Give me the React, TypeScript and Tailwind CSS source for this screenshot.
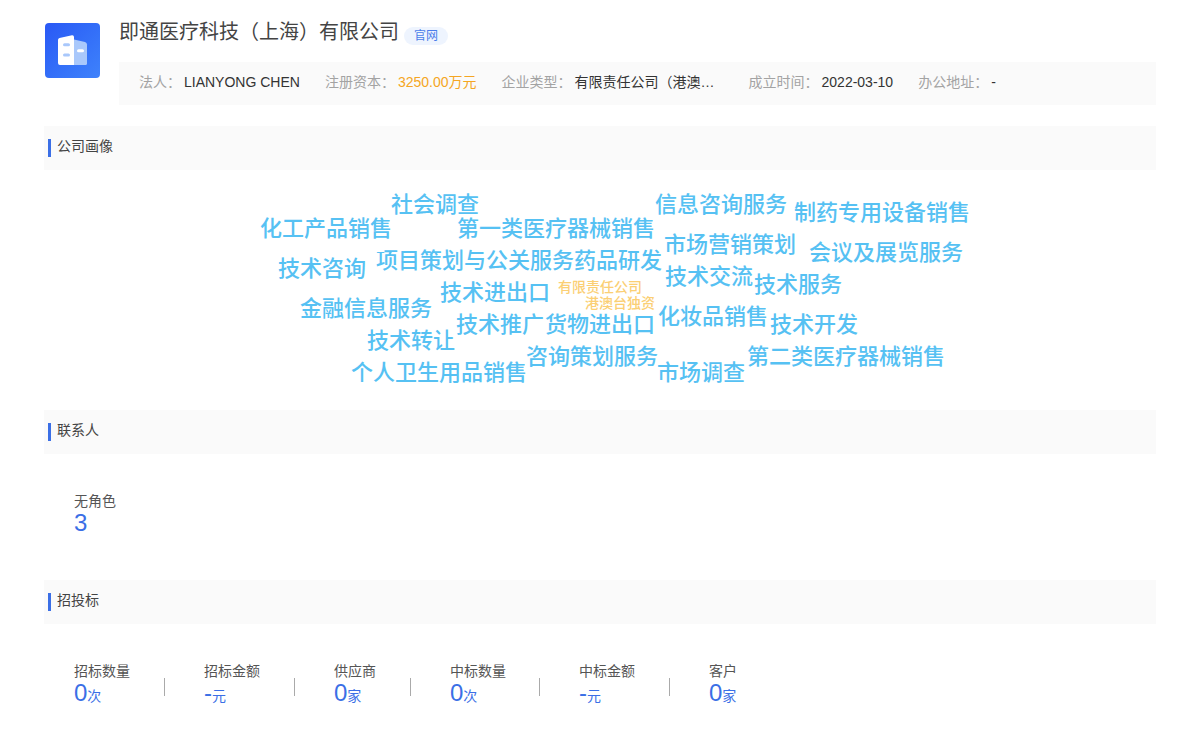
import React from "react";

const cloud: [string, number, number][] = [
  ["社会调查", 391, 204],
  ["化工产品销售", 260, 228],
  ["第一类医疗器械销售", 457, 228],
  ["信息咨询服务", 655, 204],
  ["制药专用设备销售", 794, 212],
  ["市场营销策划", 664, 244],
  ["会议及展览服务", 809, 252],
  ["技术咨询", 278, 268],
  ["项目策划与公关服务", 376, 260],
  ["药品研发", 574, 260],
  ["技术交流", 665, 276],
  ["技术服务", 754, 284],
  ["技术进出口", 440, 292],
  ["金融信息服务", 300, 308],
  ["化妆品销售", 658, 316],
  ["技术推广", 456, 324],
  ["货物进出口", 545, 324],
  ["技术开发", 770, 324],
  ["技术转让", 367, 340],
  ["咨询策划服务", 526, 356],
  ["第二类医疗器械销售", 747, 356],
  ["个人卫生用品销售", 351, 372],
  ["市场调查", 657, 372],
];

const SectionHeader = ({ title }: { title: string }) => (
  <div className="flex h-[44px] items-center bg-[#fafafa] pl-[4px]">
    <div className="h-[18px] w-[3px] bg-[#3b6fe6]" />
    <span className="ml-[6px] -translate-y-[2px] text-[14px] leading-[20px] text-[#444]">{title}</span>
  </div>
);

const Info = ({ label, value, valueClass = "text-[#333]", wide }: { label: string; value: string; valueClass?: string; wide?: boolean }) => (
  <div className="mr-[25px] flex shrink-0 items-center whitespace-nowrap">
    <span className="mr-[3px] text-[#a3a3a3]">{label}</span>
    <span className={`${valueClass} ${wide ? "w-[149px]" : ""}`}>{value}</span>
  </div>
);

const Stat = ({ label, num, unit }: { label: string; num: string; unit: string }) => (
  <div className="flex flex-col">
    <span className="h-[20px] text-[14px] leading-[20px] text-[#555]">{label}</span>
    <span className="h-[24px] leading-[24px] text-[#3b6fe6]">
      <span className="text-[24px]">{num}</span>
      <span className="text-[14px]">{unit}</span>
    </span>
  </div>
);

const stats = [
  ["招标数量", "0", "次"],
  ["招标金额", "-", "元"],
  ["供应商", "0", "家"],
  ["中标数量", "0", "次"],
  ["中标金额", "-", "元"],
  ["客户", "0", "家"],
];

export default function App() {
  return (
    <div className="h-[752px] w-[1200px] overflow-hidden bg-white pl-[44px] pr-[44px] pt-[20px] font-['Liberation_Sans','Noto_Sans_CJK_SC',sans-serif]">
      <div className="flex h-[86px]">
        <div className="ml-[1px] mt-[3px] h-[55px] w-[55px] shrink-0 overflow-hidden rounded-[4px] bg-gradient-to-br from-[#2a58f5] to-[#3f82fb]">
          <svg width="55" height="55" viewBox="0 0 55 55">
            <path d="M29 16.5 L40 19 Q42 19.5 42 21.5 V40.5 Q42 42 40.5 42 H29 Z" fill="#a9c8fb" />
            <path d="M13 17 Q13 15.3 14.5 15 L27 12.2 Q29 12 29 14 V42 H15 Q13 42 13 40 Z" fill="#ffffff" />
            <rect x="18" y="20.2" width="7" height="3" rx="1.5" fill="#a9c8fb" />
            <rect x="18" y="30.5" width="7" height="3" rx="1.5" fill="#a9c8fb" />
            <rect x="32" y="26.2" width="7" height="3" rx="1.5" fill="#ffffff" />
          </svg>
        </div>
        <div className="ml-[19px] flex min-w-0 flex-1 flex-col">
          <div className="flex h-[22px] items-center">
            <span className="translate-y-[1px] text-[20px] leading-[22px] text-[#444]">即通医疗科技（上海）有限公司</span>
            <span className="ml-[5px] mt-[9px] flex h-[18px] w-[44px] items-center justify-center rounded-full bg-[#eef4fe] text-[12px] text-[#4a7dea]">官网</span>
          </div>
          <div className="mt-[20px] flex h-[43px] items-center bg-[#fafafa] pb-[2px] pl-[20px] text-[14px]">
            <Info label="法人：" value="LIANYONG CHEN" />
            <Info label="注册资本：" value="3250.00万元" valueClass="text-[#f5a623]" />
            <Info label="企业类型：" value="有限责任公司（港澳…" wide />
            <Info label="成立时间：" value="2022-03-10" />
            <Info label="办公地址：" value="-" />
          </div>
        </div>
      </div>

      <div className="mt-[20px]">
        <SectionHeader title="公司画像" />
      </div>
      <div className="relative h-[240px]">
        {cloud.map(([text, x, y]) => (
          <span
            key={text}
            className="absolute whitespace-nowrap text-[22px] font-medium leading-[24px] text-[#56c1f3]"
            style={{ left: x - 44, top: y - 170 - 11 }}
          >
            {text}
          </span>
        ))}
        <span className="absolute left-[514px] top-[109px] whitespace-nowrap text-[14px] font-medium leading-[16px] text-[#fbcf74]">有限责任公司</span>
        <span className="absolute left-[541px] top-[125px] whitespace-nowrap text-[14px] font-medium leading-[16px] text-[#fbcf74]">港澳台独资</span>
      </div>

      <SectionHeader title="联系人" />
      <div className="h-[126px] pl-[30px] pt-[37px]">
        <div className="h-[20px] text-[14px] leading-[20px] text-[#555]">无角色</div>
        <div className="h-[24px] text-[24px] leading-[24px] text-[#3b6fe6]">3</div>
      </div>

      <SectionHeader title="招投标" />
      <div className="flex items-start pl-[30px] pt-[37px]">
        {stats.map(([l, n, u], i) => (
          <React.Fragment key={l}>
            <Stat label={l} num={n} unit={u} />
            {i < stats.length - 1 && (
              <div className={`mr-[39px] mt-[17px] h-[18px] w-px bg-[#aaa] ${i === 3 ? "ml-[33px]" : "ml-[34px]"}`} />
            )}
          </React.Fragment>
        ))}
      </div>
    </div>
  );
}
